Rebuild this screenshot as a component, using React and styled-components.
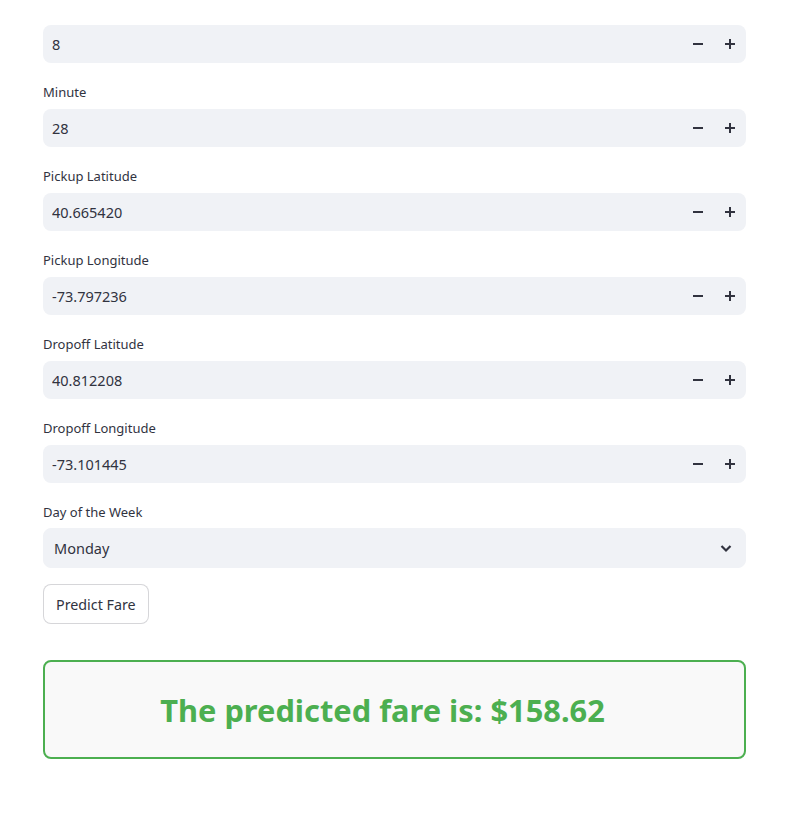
import React, { useState } from 'react'
import styled, { createGlobalStyle } from 'styled-components'

const GlobalStyle = createGlobalStyle`
  html, body {
    margin: 0;
    padding: 0;
    background: #ffffff;
  }
  body {
    font-family: "Source Sans Pro", "Noto Sans", sans-serif;
    color: rgb(49, 51, 63);
  }
`

const Page = styled.div`
  width: 703px;
  margin-left: 43px;
  padding-top: 25px;
  display: flex;
  flex-direction: column;
  gap: 16px;
`

const Field = styled.div`
  display: flex;
  flex-direction: column;
`

const Label = styled.label`
  font-size: 13px;
  line-height: 24px;
  height: 24px;
  padding-top: 1px;
  margin-bottom: ${p => p.$gap || 5}px;
  color: rgb(49, 51, 63);
`

const InputRow = styled.div`
  display: flex;
  align-items: center;
  height: 38px;
  background: #f0f2f6;
  border-radius: 8px;
`

const NumInput = styled.input`
  flex: 1;
  border: none;
  background: transparent;
  font-family: inherit;
  font-size: 14.5px;
  color: rgb(49, 51, 63);
  padding: 0 9px;
  height: 100%;
  outline: none;
`

const Step = styled.button`
  width: 32px;
  height: 38px;
  border: none;
  background: transparent;
  display: flex;
  align-items: center;
  justify-content: center;
  padding: 0;
  cursor: pointer;
  color: rgb(49, 51, 63);
`

const Select = styled.div`
  display: flex;
  align-items: center;
  justify-content: space-between;
  height: 40px;
  box-sizing: border-box;
  border: 1px solid #f0f2f6;
  background: #f0f2f6;
  border-radius: 8px;
  padding: 0 12px 0 10px;
  font-size: 14.5px;
`

const Button = styled.button`
  align-self: flex-start;
  height: 40px;
  padding: 0 12px;
  border: 1px solid rgba(49, 51, 63, 0.2);
  border-radius: 8px;
  background: #ffffff;
  font-family: inherit;
  font-size: 14.3px;
  color: rgb(49, 51, 63);
`

const Result = styled.div`
  margin-top: 20px;
  height: 99px;
  box-sizing: border-box;
  border: 2px solid #4caf50;
  border-radius: 8px;
  background: #f9f9f9;
  display: flex;
  align-items: center;
  justify-content: center;
  padding-right: 24px;
`

const ResultText = styled.h2`
  margin: 0;
  color: #4caf50;
  font-size: 30.8px;
  font-weight: 700;
`

const Minus = () => (
  <svg width="12" height="12" viewBox="0 0 12 12">
    <rect x="1" y="5" width="10" height="2" fill="currentColor" />
  </svg>
)

const Plus = () => (
  <svg width="12" height="12" viewBox="0 0 12 12">
    <rect x="1" y="5" width="10" height="2" fill="currentColor" />
    <rect x="5" y="1" width="2" height="10" fill="currentColor" />
  </svg>
)

const Chevron = () => (
  <svg width="14" height="14" viewBox="0 0 14 14">
    <path d="M2.5 5 L7 9.5 L11.5 5" fill="none" stroke="currentColor" strokeWidth="2.2" />
  </svg>
)

function NumberField({ label, value }) {
  return (
    <Field>
      {label && <Label>{label}</Label>}
      <InputRow>
        <NumInput defaultValue={value} />
        <Step><Minus /></Step>
        <Step><Plus /></Step>
      </InputRow>
    </Field>
  )
}

const fields = [
  ['Minute', '28'],
  ['Pickup Latitude', '40.665420'],
  ['Pickup Longitude', '-73.797236'],
  ['Dropoff Latitude', '40.812208'],
  ['Dropoff Longitude', '-73.101445'],
]

export default function App() {
  const [day] = useState('Monday')

  return (
    <>
      <GlobalStyle />
      <Page>
        <NumberField value="8" />
        {fields.map(([label, value]) => (
          <NumberField key={label} label={label} value={value} />
        ))}
        <Field>
          <Label $gap={4}>Day of the Week</Label>
          <Select>
            <span>{day}</span>
            <Chevron />
          </Select>
        </Field>
        <Button>Predict Fare</Button>
        <Result>
          <ResultText>The predicted fare is: $158.62</ResultText>
        </Result>
      </Page>
    </>
  )
}
